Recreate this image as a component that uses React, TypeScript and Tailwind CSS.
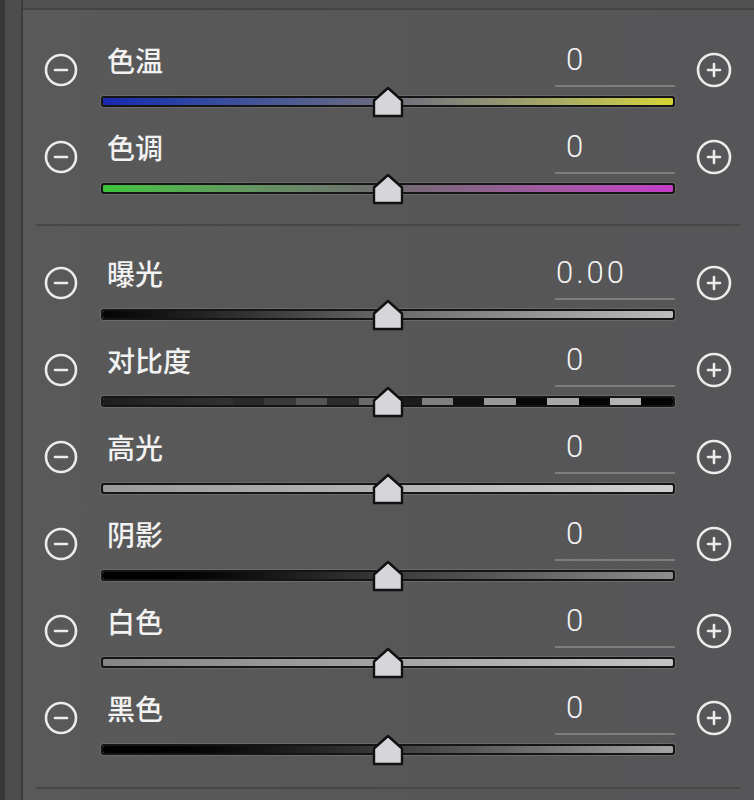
import React from "react";

type Row = {
  label: string;
  value: string;
  track: React.ReactNode;
};

function MinusIcon() {
  return (
    <svg width="34" height="34" viewBox="0 0 34 34" fill="none">
      <circle cx="17" cy="17" r="15" stroke="#ececec" strokeWidth="2.6" />
      <line x1="11" y1="17" x2="23" y2="17" stroke="#ececec" strokeWidth="2.6" strokeLinecap="round" />
    </svg>
  );
}

function PlusIcon() {
  return (
    <svg width="36" height="36" viewBox="0 0 36 36" fill="none">
      <circle cx="18" cy="18" r="16" stroke="#ececec" strokeWidth="2.6" />
      <line x1="12" y1="18" x2="24" y2="18" stroke="#ececec" strokeWidth="2.6" strokeLinecap="round" />
      <line x1="18" y1="12" x2="18" y2="24" stroke="#ececec" strokeWidth="2.6" strokeLinecap="round" />
    </svg>
  );
}

function Thumb() {
  return (
    <svg width="32" height="32" viewBox="0 0 32 32" className="absolute left-1/2 top-[-12px] -translate-x-1/2">
      <polygon
        points="16,2 30,14.5 30,30 2,30 2,14.5"
        fill="#d6d5da"
        stroke="#111"
        strokeWidth="2.4"
        strokeLinejoin="round"
      />
    </svg>
  );
}

function Track({ fill }: { fill: React.ReactNode }) {
  return (
    <div className="relative mt-[9px] h-[11px] w-full rounded-[3px] border-2 border-[#151515] shadow-[0_0_0_1px_#6a6a6a]">
      <div className="h-full w-full overflow-hidden rounded-[2px]">{fill}</div>
      <Thumb />
    </div>
  );
}

// Alternating light/dark blocks that grow in contrast to the right
function ContrastFill() {
  const blocks = [
    "bg-[#2a2a2a]",
    "bg-[#3a3a3a]",
    "bg-[#555555]",
    "bg-[#2c2c2c]",
    "bg-[#6a6a6a]",
    "bg-[#1c1c1c]",
    "bg-[#808080]",
    "bg-[#101010]",
    "bg-[#999999]",
    "bg-[#080808]",
    "bg-[#a8a8a8]",
    "bg-[#050505]",
    "bg-[#b4b4b4]",
    "bg-[#030303]",
  ];
  return (
    <div className="flex h-full w-full">
      <div className="h-full w-[130px] bg-gradient-to-r from-[#1e1e1e] to-[#333333]" />
      {blocks.map((b, i) => (
        <div key={i} className={`h-full flex-1 ${b}`} />
      ))}
    </div>
  );
}

const groupA: Row[] = [
  {
    label: "色温",
    value: "0",
    track: <div className="h-full w-full bg-gradient-to-r from-[#1a26b0] via-[#6e6c7e] to-[#d4d530]" />,
  },
  {
    label: "色调",
    value: "0",
    track: <div className="h-full w-full bg-gradient-to-r from-[#3cc43a] via-[#6f6a70] to-[#c53cc8]" />,
  },
];

const groupB: Row[] = [
  {
    label: "曝光",
    value: "0.00",
    track: <div className="h-full w-full bg-gradient-to-r from-[#050505] via-[#6a6a6a] to-[#bdbdbd]" />,
  },
  { label: "对比度", value: "0", track: <ContrastFill /> },
  {
    label: "高光",
    value: "0",
    track: <div className="h-full w-full bg-gradient-to-r from-[#9a9a9a] to-[#cfcfcf]" />,
  },
  {
    label: "阴影",
    value: "0",
    track: <div className="h-full w-full bg-gradient-to-r from-[#000000] via-[#3a3a3a] to-[#8e8e8e]" />,
  },
  {
    label: "白色",
    value: "0",
    track: <div className="h-full w-full bg-gradient-to-r from-[#858585] to-[#c4c4c4]" />,
  },
  {
    label: "黑色",
    value: "0",
    track: <div className="h-full w-full bg-gradient-to-r from-[#000000] via-[#3c3c3c] to-[#a4a4a4]" />,
  },
];

function SliderRow({ row }: { row: Row }) {
  return (
    <div className="flex h-[87px]">
      <div className="w-[101px] shrink-0 pl-[44px] pt-[27px]">
        <MinusIcon />
      </div>
      <div className="w-[574px] shrink-0">
        <div className="flex h-[61px] items-start justify-between">
          <span
            className="pl-[6px] pt-[14px] text-[28px] leading-[40px] font-medium text-[#f2f2f2]"
            style={{ fontFamily: '"Noto Sans CJK SC", sans-serif' }}
          >
            {row.label}
          </span>
          <div className="flex h-full w-[120px] items-start border-b-2 border-[#7e7e7e] pl-[1px] pt-[16px]">
            <span
              className={`text-[31px] leading-[36px] font-light tracking-[3px] text-[#f4f4f4] ${
                row.value === "0" ? "pl-[10px]" : ""
              }`}
              style={{ fontFamily: "Roboto, sans-serif" }}
            >
              {row.value}
            </span>
          </div>
        </div>
        <Track fill={row.track} />
      </div>
      <div className="shrink-0 pl-[21px] pt-[26px]">
        <PlusIcon />
      </div>
    </div>
  );
}

export default function App() {
  return (
    <div className="flex h-[800px] w-[754px] overflow-hidden bg-[#575757]">
      <div className="w-[5px] shrink-0 bg-[#383838]" />
      <div className="w-[16px] shrink-0 bg-[#4d4d4d]" />
      <div className="w-[2px] shrink-0 bg-[#3c3c3c]" />
      <div className="relative flex-1 bg-gradient-to-r from-[#595959] via-[#575757] to-[#565558]">
        <div className="h-[8px] bg-[#505050]" />
        <div className="h-[2px] bg-[#444444]" />
        <div className="-ml-[23px] pt-[16px]">
          {groupA.map((r) => (
            <SliderRow key={r.label} row={r} />
          ))}
          <div className="ml-[36px] mr-[14px] mt-[24px] h-[2px] bg-[#474747]" />
          <div className="pt-[13px]">
            {groupB.map((r) => (
              <SliderRow key={r.label} row={r} />
            ))}
          </div>
          <div className="ml-[36px] mr-[14px] mt-[26px] h-[2px] bg-[#474747]" />
        </div>
      </div>
    </div>
  );
}
